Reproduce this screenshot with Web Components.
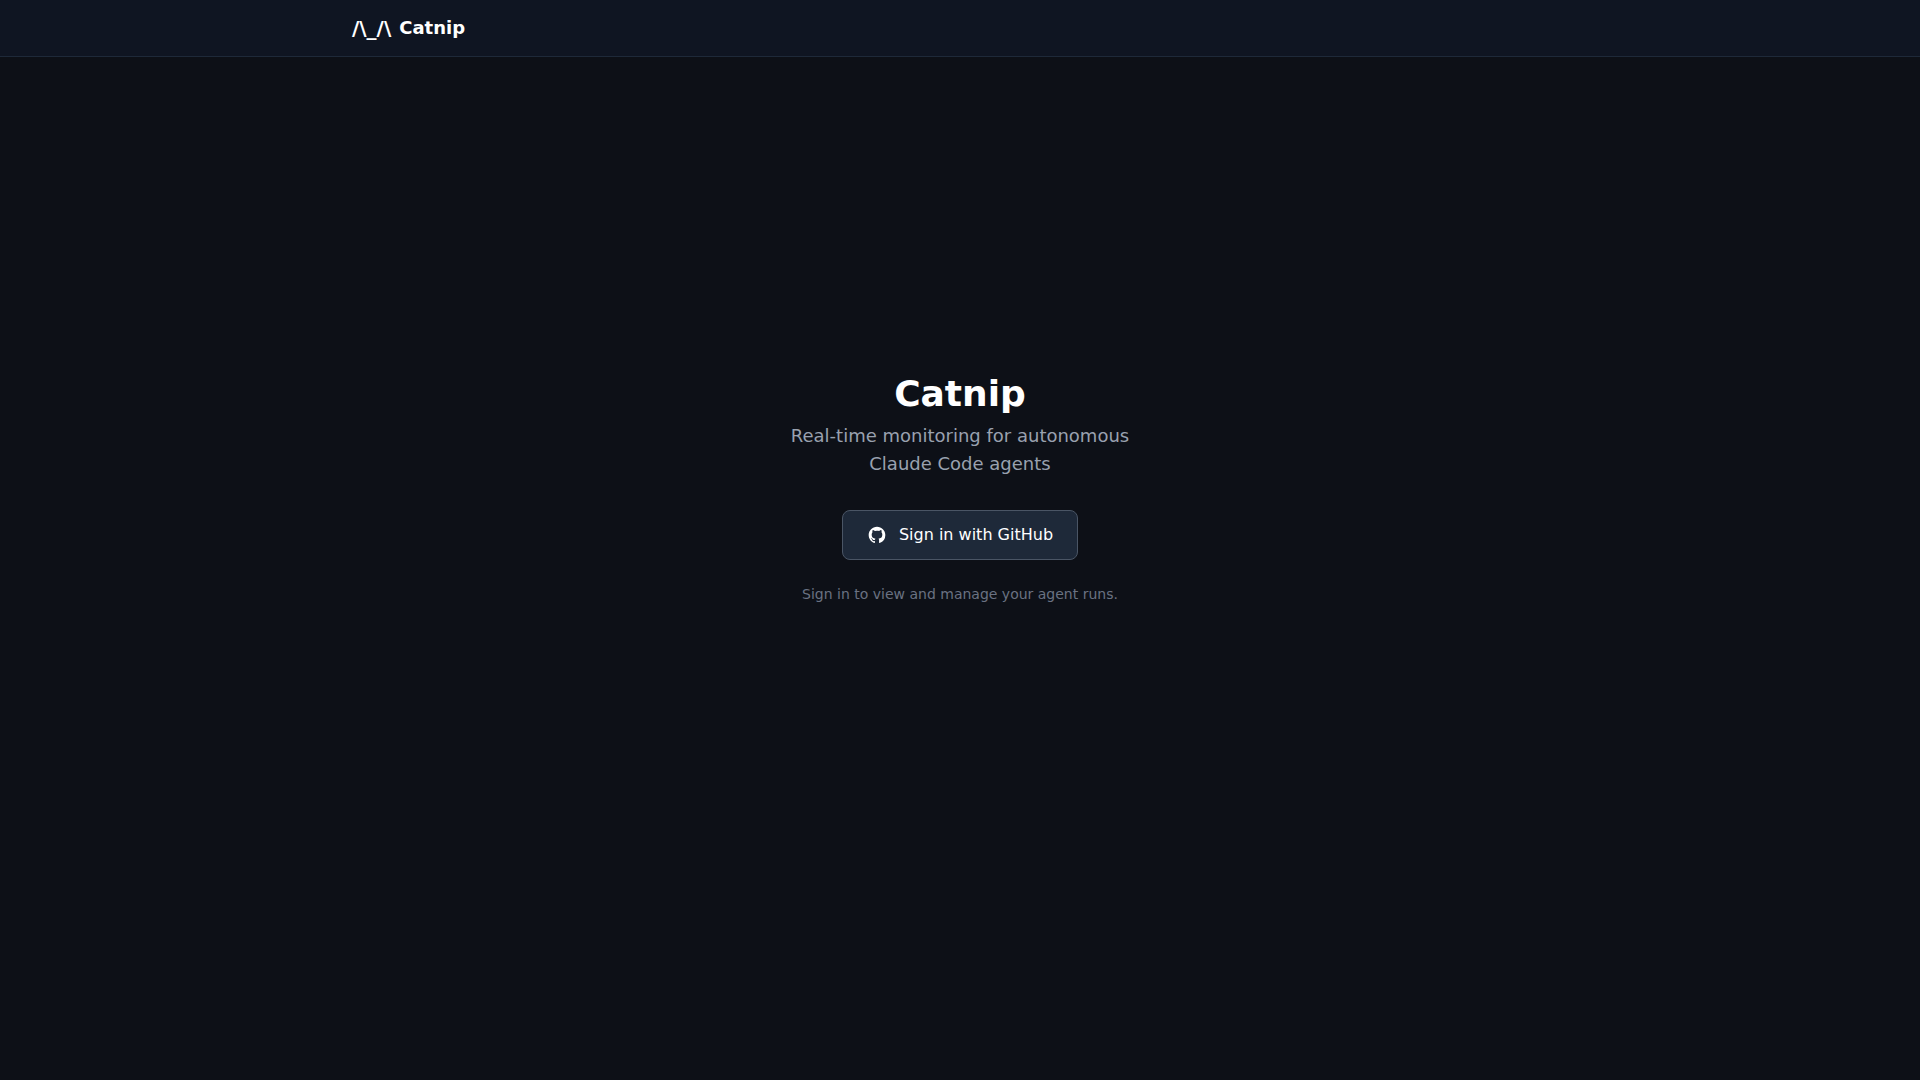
<!DOCTYPE html>
<html lang="en">
<head>
<meta charset="utf-8">
<title>Catnip</title>
<style>
body { margin: 0; background: #0d1017; color: #fff; font-family: "DejaVu Sans", sans-serif; }
</style>
</head>
<body>
<catnip-app></catnip-app>

<template id="app-template">
<style>
:host { display: flex; flex-direction: column; min-height: 100vh; }
main { display: flex; justify-content: center; padding: 0 16px; }
</style>
<catnip-header>Catnip</catnip-header>
<main>
<sign-in-panel>
<span slot="title">Catnip</span>
<span slot="tagline">Real-time monitoring for autonomous Claude Code agents</span>
<github-button slot="action">Sign in with GitHub</github-button>
<span slot="note">Sign in to view and manage your agent runs.</span>
</sign-in-panel>
</main>
</template>

<template id="header-template">
<style>
:host { display: block; }
header { background: #0f1522; border-bottom: 1px solid #1e2939; }
nav { box-sizing: border-box; max-width: 1280px; height: 56px; margin: 0 auto; padding: 0 32px; display: flex; align-items: center; }
a { display: flex; align-items: center; gap: 8px; color: #fff; text-decoration: none; font-size: 18px; line-height: 28px; font-weight: 700; }
.mark { font-size: 20px; }
</style>
<header><nav><a href="#"><span class="mark">/\_/\</span><span><slot></slot></span></a></nav></header>
</template>

<template id="panel-template">
<style>
:host { display: flex; flex-direction: column; align-items: center; justify-content: center; gap: 32px; min-height: 80vh; max-width: 384px; text-align: center; }
.intro { display: flex; flex-direction: column; gap: 8px; }
.access { display: flex; flex-direction: column; align-items: center; gap: 24px; }
h1, p { margin: 0; }
h1 { font-size: 36px; line-height: 40px; font-weight: 700; }
.tagline { color: #99a1af; font-size: 18px; line-height: 28px; }
.note { color: #6a7282; font-size: 14px; line-height: 20px; }
</style>
<div class="intro">
<h1><slot name="title"></slot></h1>
<p class="tagline"><slot name="tagline"></slot></p>
</div>
<div class="access">
<slot name="action"></slot>
<p class="note"><slot name="note"></slot></p>
</div>
</template>

<template id="button-template">
<style>
:host { display: inline-block; }
button { display: flex; align-items: center; gap: 12px; padding: 12px 24px; border: 1px solid #4a5565; border-radius: 8px; background: #1e2939; color: #fff; font: 500 16px/24px "DejaVu Sans", sans-serif; cursor: pointer; }
svg { width: 20px; height: 20px; fill: currentColor; }
</style>
<button type="button">
<svg viewBox="0 0 24 24" aria-hidden="true"><path fill-rule="evenodd" clip-rule="evenodd" d="M12 2C6.477 2 2 6.484 2 12.017c0 4.425 2.865 8.18 6.839 9.504.5.092.682-.217.682-.483 0-.237-.008-.868-.013-1.703-2.782.605-3.369-1.343-3.369-1.343-.454-1.158-1.11-1.466-1.11-1.466-.908-.62.069-.608.069-.608 1.003.07 1.531 1.032 1.531 1.032.892 1.53 2.341 1.088 2.91.832.092-.647.35-1.088.636-1.338-2.22-.253-4.555-1.113-4.555-4.951 0-1.093.39-1.988 1.029-2.688-.103-.253-.446-1.272.098-2.65 0 0 .84-.27 2.75 1.026A9.564 9.564 0 0112 6.844c.85.004 1.705.115 2.504.337 1.909-1.296 2.747-1.027 2.747-1.027.546 1.379.202 2.398.1 2.651.64.7 1.028 1.595 1.028 2.688 0 3.848-2.339 4.695-4.566 4.943.359.309.678.92.678 1.855 0 1.338-.012 2.419-.012 2.747 0 .268.18.58.688.482A10.019 10.019 0 0022 12.017C22 6.484 17.522 2 12 2z"/></svg>
<span><slot></slot></span>
</button>
</template>

<script>
const define = (name, templateId) => customElements.define(name, class extends HTMLElement {
  constructor() {
    super();
    this.attachShadow({ mode: "open" }).append(document.getElementById(templateId).content.cloneNode(true));
  }
});
define("github-button", "button-template");
define("sign-in-panel", "panel-template");
define("catnip-header", "header-template");
define("catnip-app", "app-template");
</script>
</body>
</html>
